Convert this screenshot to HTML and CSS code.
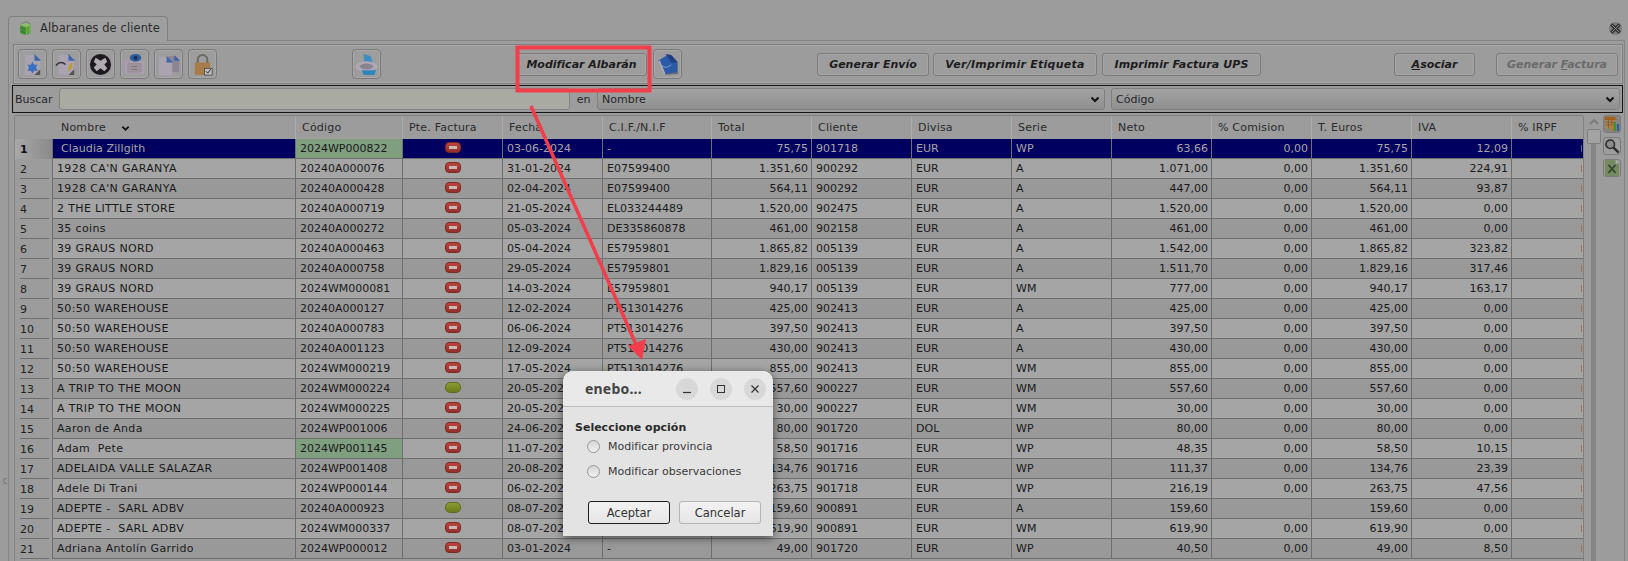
FILE: index.html
```html
<!DOCTYPE html>
<html lang="es">
<head>
<meta charset="utf-8">
<title>Albaranes de cliente</title>
<link rel="stylesheet" href="styles.css">
</head>
<body>
<div class="app">
  <div class="tabbar">
    <div class="tab">
      <svg class="tab-icon" viewBox="0 0 16 16"><path d="M3 3l5-2 5 2v10l-5 2-5-2z" fill="#8a8a84"/><path d="M2 5l6 2v8l-6-2z" fill="#4f9a3c"/><path d="M8 7l5-2v8l-5 2z" fill="#6fb04a"/><path d="M2 5l6-2 5 2-5 2z" fill="#8fc26a"/><path d="M4 6v8M6 6.500v8M2 8l6 2M2 11l6 2M10 6.500v8" stroke="#2f6a2a" stroke-width=".5"/></svg>
      <span>Albaranes de cliente</span>
    </div>
    <svg class="close-tab" viewBox="0 0 16 16"><circle cx="8" cy="8" r="7" fill="#7c7c7c"/><path d="M3.500 3.500l9 9M12.500 3.500l-9 9" stroke="#2f2f2f" stroke-width="3.400"/><path d="M4 4l8 8M12 4l-8 8" stroke="#8f8f8f" stroke-width="1"/></svg>
  </div>
  <div class="pane">
    <div class="toolbar">
      <button class="icon-btn"><svg viewBox="0 0 24 24"><path d="M4 2h11l5 5v16H4z" fill="#aba3b0"/><path d="M14 1l7 7h-7z" fill="#3f66a8"/><path d="M12 9l1.800 3.200 3.600 0-1.800 3 1.800 3.200-3.600 0L12 21.500l-1.800-3.100-3.600 0 1.800-3.200-1.800-3 3.600 0z" fill="#3b6fc0"/><path d="M20 17v6h-6z" fill="#57544f"/></svg></button>
      <button class="icon-btn icon-gap"><svg viewBox="0 0 24 24"><path d="M4 2h11l5 5v16H4z" fill="#aba3b0"/><path d="M14 1l7 7h-7z" fill="#3f66a8"/><path d="M1 13c3-4 7-4 10-1" fill="none" stroke="#333" stroke-width="1.500"/><path d="M17 10a6 6 0 0 1-6 9c3 0 4-2 3-4z" fill="#c09a1c"/><path d="M20 17v6h-6z" fill="#57544f"/></svg></button>
      <button class="icon-btn icon-gap"><svg viewBox="0 0 24 24"><circle cx="12" cy="12" r="11" fill="#1c1a1e"/><path d="M7 5l5 3 5-3 2 4-3 3 3 4-3 3-4-3-4 3-3-4 3-3-3-3z" fill="#b0abb0"/></svg></button>
      <button class="icon-btn icon-gap"><svg viewBox="0 0 24 24"><path d="M2 8l20 0v14H2z" fill="#aaa0ad"/><path d="M5 11h14v9H5z" fill="#a0959f" stroke="#8a8088" stroke-width=".5"/><path d="M9 14h6M9 17h6" stroke="#777" stroke-width="1"/><ellipse cx="13" cy="5" rx="6" ry="4" fill="#2d5c9c"/><circle cx="13" cy="5" r="2" fill="#122c55"/></svg></button>
      <button class="icon-btn icon-gap"><svg viewBox="0 0 24 24"><path d="M11 3h8l4 4v13H11z" fill="#8d8592"/><path d="M18 2l6 6h-6z" fill="#3f66a8"/><path d="M2 4h9l5 5v14H2z" fill="#aba3b0"/><path d="M10 3l7 7h-7z" fill="#3f66a8"/></svg></button>
      <button class="icon-btn icon-gap"><svg viewBox="0 0 24 24"><path d="M7 11V7a5 5 0 0 1 10 0v4" fill="none" stroke="#6a6660" stroke-width="2"/><rect x="4" y="10" width="16" height="13" rx="1" fill="#a87c48"/><rect x="14" y="16" width="8" height="7" fill="#c0c0c0" stroke="#333" stroke-width=".7"/><path d="M15.500 19l2 2 3-4" fill="none" stroke="#222" stroke-width="1"/></svg></button>
      <button class="icon-btn printer-gap"><svg viewBox="0 0 24 24"><path d="M9 1l7 2 4 10H10z" fill="#3a8ec0"/><ellipse cx="12" cy="14" rx="11.500" ry="5.500" fill="#b0a8b4"/><ellipse cx="12" cy="14" rx="7" ry="3" fill="#8a8490"/><path d="M7 18h15l-2 5H9z" fill="#2f86bb"/></svg></button>
      <button class="text-btn mod-btn">Modificar Albarán</button>
      <button class="icon-btn doc-gap"><svg viewBox="0 0 24 24"><path d="M10 23l13-1V10l-13 6z" fill="#6f6f6f"/><path d="M2 8l10-6 10 8v10l-13 2z" fill="#2a5aa8"/><path d="M10 1l6 1 7 8-7 0z" fill="#1e3f80"/><path d="M3 8l6 14" stroke="#b0a8b0" stroke-width="2"/><path d="M6 13c3 3 7 2 10-1" fill="none" stroke="#7ea8d8" stroke-width="1"/></svg></button>
      <button class="text-btn envio-btn">Generar Envío</button>
      <button class="text-btn ver-btn">Ver/Imprimir Etiqueta</button>
      <button class="text-btn ups-btn">Imprimir Factura UPS</button>
      <button class="text-btn asociar-btn"><u>A</u>sociar</button>
      <button class="text-btn factura-btn">Generar <u>F</u>actura</button>
    </div>
    <div class="searchbar">
      <label class="search-label">Buscar</label>
      <div class="search-input"></div>
      <span class="search-en">en</span>
      <div class="select select-a"><span>Nombre</span><svg class="chev" viewBox="0 0 10 7"><path d="M1.500 1.500L5 5l3.500-3.500" fill="none" stroke="#111" stroke-width="2"/></svg></div>
      <div class="select select-b"><span>Código</span><svg class="chev" viewBox="0 0 10 7"><path d="M1.500 1.500L5 5l3.500-3.500" fill="none" stroke="#111" stroke-width="2"/></svg></div>
    </div>
    <div class="main">
      <div class="table-wrap">
        <table class="grid">
          <colgroup>
            <col class="c-num"><col class="c-name"><col class="c-code"><col class="c-std"><col class="c-std"><col class="c-cif"><col class="c-std"><col class="c-std"><col class="c-std"><col class="c-std"><col class="c-std"><col class="c-std"><col class="c-std"><col class="c-std"><col class="c-last">
          </colgroup>
          <thead>
            <tr><th class="corner"></th><th class="th-name">Nombre <svg class="chev sort" viewBox="0 0 10 7"><path d="M1.500 1.500L5 5l3.500-3.500" fill="none" stroke="#111" stroke-width="2"/></svg></th><th>Código</th><th>Pte. Factura</th><th>Fecha</th><th>C.I.F./N.I.F</th><th>Total</th><th>Cliente</th><th>Divisa</th><th>Serie</th><th>Neto</th><th>% Comision</th><th>T. Euros</th><th>IVA</th><th>% IRPF</th></tr>
          </thead>
          <tbody>
            <tr class="sel"><td class="num">1</td><td class="ind">Claudia Zillgith</td><td class="green">2024WP000822</td><td class="st"><i class="pill red"></i></td><td>03-06-2024</td><td>-</td><td class="r">75,75</td><td>901718</td><td>EUR</td><td>WP</td><td class="r">63,66</td><td class="r">0,00</td><td class="r">75,75</td><td class="r">12,09</td><td class="irpf"></td></tr>
            <tr class="even"><td class="num">2</td><td class="nm">1928 CA'N GARANYA</td><td>20240A000076</td><td class="st"><i class="pill red"></i></td><td>31-01-2024</td><td>E07599400</td><td class="r">1.351,60</td><td>900292</td><td>EUR</td><td>A</td><td class="r">1.071,00</td><td class="r">0,00</td><td class="r">1.351,60</td><td class="r">224,91</td><td class="irpf"></td></tr>
            <tr><td class="num">3</td><td class="nm">1928 CA'N GARANYA</td><td>20240A000428</td><td class="st"><i class="pill red"></i></td><td>02-04-2024</td><td>E07599400</td><td class="r">564,11</td><td>900292</td><td>EUR</td><td>A</td><td class="r">447,00</td><td class="r">0,00</td><td class="r">564,11</td><td class="r">93,87</td><td class="irpf"></td></tr>
            <tr class="even"><td class="num">4</td><td class="nm">2 THE LITTLE STORE</td><td>20240A000719</td><td class="st"><i class="pill red"></i></td><td>21-05-2024</td><td>EL033244489</td><td class="r">1.520,00</td><td>902475</td><td>EUR</td><td>A</td><td class="r">1.520,00</td><td class="r">0,00</td><td class="r">1.520,00</td><td class="r">0,00</td><td class="irpf"></td></tr>
            <tr><td class="num">5</td><td class="nm">35 coins</td><td>20240A000272</td><td class="st"><i class="pill red"></i></td><td>05-03-2024</td><td>DE335860878</td><td class="r">461,00</td><td>902158</td><td>EUR</td><td>A</td><td class="r">461,00</td><td class="r">0,00</td><td class="r">461,00</td><td class="r">0,00</td><td class="irpf"></td></tr>
            <tr class="even"><td class="num">6</td><td class="nm">39 GRAUS NORD</td><td>20240A000463</td><td class="st"><i class="pill red"></i></td><td>05-04-2024</td><td>E57959801</td><td class="r">1.865,82</td><td>005139</td><td>EUR</td><td>A</td><td class="r">1.542,00</td><td class="r">0,00</td><td class="r">1.865,82</td><td class="r">323,82</td><td class="irpf"></td></tr>
            <tr><td class="num">7</td><td class="nm">39 GRAUS NORD</td><td>20240A000758</td><td class="st"><i class="pill red"></i></td><td>29-05-2024</td><td>E57959801</td><td class="r">1.829,16</td><td>005139</td><td>EUR</td><td>A</td><td class="r">1.511,70</td><td class="r">0,00</td><td class="r">1.829,16</td><td class="r">317,46</td><td class="irpf"></td></tr>
            <tr class="even"><td class="num">8</td><td class="nm">39 GRAUS NORD</td><td>2024WM000081</td><td class="st"><i class="pill red"></i></td><td>14-03-2024</td><td>E57959801</td><td class="r">940,17</td><td>005139</td><td>EUR</td><td>WM</td><td class="r">777,00</td><td class="r">0,00</td><td class="r">940,17</td><td class="r">163,17</td><td class="irpf"></td></tr>
            <tr><td class="num">9</td><td class="nm">50:50 WAREHOUSE</td><td>20240A000127</td><td class="st"><i class="pill red"></i></td><td>12-02-2024</td><td>PT513014276</td><td class="r">425,00</td><td>902413</td><td>EUR</td><td>A</td><td class="r">425,00</td><td class="r">0,00</td><td class="r">425,00</td><td class="r">0,00</td><td class="irpf"></td></tr>
            <tr class="even"><td class="num">10</td><td class="nm">50:50 WAREHOUSE</td><td>20240A000783</td><td class="st"><i class="pill red"></i></td><td>06-06-2024</td><td>PT513014276</td><td class="r">397,50</td><td>902413</td><td>EUR</td><td>A</td><td class="r">397,50</td><td class="r">0,00</td><td class="r">397,50</td><td class="r">0,00</td><td class="irpf"></td></tr>
            <tr><td class="num">11</td><td class="nm">50:50 WAREHOUSE</td><td>20240A001123</td><td class="st"><i class="pill red"></i></td><td>12-09-2024</td><td>PT513014276</td><td class="r">430,00</td><td>902413</td><td>EUR</td><td>A</td><td class="r">430,00</td><td class="r">0,00</td><td class="r">430,00</td><td class="r">0,00</td><td class="irpf"></td></tr>
            <tr class="even"><td class="num">12</td><td class="nm">50:50 WAREHOUSE</td><td>2024WM000219</td><td class="st"><i class="pill red"></i></td><td>17-05-2024</td><td>PT513014276</td><td class="r">855,00</td><td>902413</td><td>EUR</td><td>WM</td><td class="r">855,00</td><td class="r">0,00</td><td class="r">855,00</td><td class="r">0,00</td><td class="irpf"></td></tr>
            <tr><td class="num">13</td><td class="nm">A TRIP TO THE MOON</td><td>2024WM000224</td><td class="st"><i class="pill olive"></i></td><td>20-05-2024</td><td></td><td class="r">557,60</td><td>900227</td><td>EUR</td><td>WM</td><td class="r">557,60</td><td class="r">0,00</td><td class="r">557,60</td><td class="r">0,00</td><td class="irpf"></td></tr>
            <tr class="even"><td class="num">14</td><td class="nm">A TRIP TO THE MOON</td><td>2024WM000225</td><td class="st"><i class="pill red"></i></td><td>20-05-2024</td><td></td><td class="r">30,00</td><td>900227</td><td>EUR</td><td>WM</td><td class="r">30,00</td><td class="r">0,00</td><td class="r">30,00</td><td class="r">0,00</td><td class="irpf"></td></tr>
            <tr><td class="num">15</td><td class="nm">Aaron de Anda</td><td>2024WP001006</td><td class="st"><i class="pill red"></i></td><td>24-06-2024</td><td></td><td class="r">80,00</td><td>901720</td><td>DOL</td><td>WP</td><td class="r">80,00</td><td class="r">0,00</td><td class="r">80,00</td><td class="r">0,00</td><td class="irpf"></td></tr>
            <tr class="even"><td class="num">16</td><td class="nm">Adam&nbsp; Pete</td><td class="green">2024WP001145</td><td class="st"><i class="pill red"></i></td><td>11-07-2024</td><td></td><td class="r">58,50</td><td>901716</td><td>EUR</td><td>WP</td><td class="r">48,35</td><td class="r">0,00</td><td class="r">58,50</td><td class="r">10,15</td><td class="irpf"></td></tr>
            <tr><td class="num">17</td><td class="nm">ADELAIDA VALLE SALAZAR</td><td>2024WP001408</td><td class="st"><i class="pill red"></i></td><td>20-08-2024</td><td></td><td class="r">134,76</td><td>901716</td><td>EUR</td><td>WP</td><td class="r">111,37</td><td class="r">0,00</td><td class="r">134,76</td><td class="r">23,39</td><td class="irpf"></td></tr>
            <tr class="even"><td class="num">18</td><td class="nm">Adele Di Trani</td><td>2024WP000144</td><td class="st"><i class="pill red"></i></td><td>06-02-2024</td><td></td><td class="r">263,75</td><td>901718</td><td>EUR</td><td>WP</td><td class="r">216,19</td><td class="r">0,00</td><td class="r">263,75</td><td class="r">47,56</td><td class="irpf"></td></tr>
            <tr><td class="num">19</td><td class="nm">ADEPTE -&nbsp; SARL ADBV</td><td>20240A000923</td><td class="st"><i class="pill olive"></i></td><td>08-07-2024</td><td></td><td class="r">159,60</td><td>900891</td><td>EUR</td><td>A</td><td class="r">159,60</td><td class="r"></td><td class="r">159,60</td><td class="r">0,00</td><td class="irpf"></td></tr>
            <tr class="even"><td class="num">20</td><td class="nm">ADEPTE -&nbsp; SARL ADBV</td><td>2024WM000337</td><td class="st"><i class="pill red"></i></td><td>08-07-2024</td><td></td><td class="r">619,90</td><td>900891</td><td>EUR</td><td>WM</td><td class="r">619,90</td><td class="r">0,00</td><td class="r">619,90</td><td class="r">0,00</td><td class="irpf"></td></tr>
            <tr><td class="num">21</td><td class="nm">Adriana Antolín Garrido</td><td>2024WP000012</td><td class="st"><i class="pill red"></i></td><td>03-01-2024</td><td>-</td><td class="r">49,00</td><td>901720</td><td>EUR</td><td>WP</td><td class="r">40,50</td><td class="r">0,00</td><td class="r">49,00</td><td class="r">8,50</td><td class="irpf"></td></tr>
          </tbody>
        </table>
      </div>
      <div class="scrollbar">
        <svg class="scroll-up" viewBox="0 0 10 6"><path d="M1 5l4-4 4 4" fill="none" stroke="#7a7a7a" stroke-width="2"/></svg>
        <div class="scroll-thumb"></div>
        <div class="scroll-track"></div>
      </div>
      <div class="side-tools">
        <button class="side-btn side-on"><svg viewBox="0 0 18 18"><rect x="1" y="1" width="12" height="13" fill="#a8875a"/><path d="M1 4h12M1 7h12M1 10h12M5 1v13M9 1v13" stroke="#7e4f22" stroke-width=".8"/><rect x="1" y="1" width="12" height="3" fill="#a8611c"/><rect x="8" y="10" width="2.500" height="7" fill="#b87a18"/><rect x="11" y="7" width="2.500" height="10" fill="#3f8f3a"/><rect x="14.500" y="9" width="2.500" height="8" fill="#2b5f9f"/></svg></button>
        <button class="side-btn"><svg viewBox="0 0 18 18"><circle cx="7" cy="7" r="4.800" fill="#8c8c8c" stroke="#2d2d2d" stroke-width="1.800"/><path d="M10.500 10.500l6 6" stroke="#2d2d2d" stroke-width="2.600"/></svg></button>
        <button class="side-btn"><svg viewBox="0 0 18 18"><path d="M1 0h12l4 4v14H1z" fill="#758a63"/><path d="M13 0l4 4h-4z" fill="#b5b5b5"/><path d="M5 5.500l8 9M13 5.500l-8 9" stroke="#33492a" stroke-width="1.800"/></svg></button>
      </div>
    </div>
  </div>
  <i class="split-mark"></i>

  <svg class="annot" viewBox="0 0 1628 561">
    <rect class="annot-box" x="517.500" y="47.500" width="132" height="43"/>
    <path class="annot-line" d="M531 106L638 349"/>
    <path class="annot-head" d="M642 360L628 346L646 339z"/>
  </svg>

  <div class="dialog">
    <div class="dlg-title">
      <span class="dlg-name">enebo...</span>
      <span class="wm-btn"><svg viewBox="0 0 22 22"><path d="M7 14.500h8" stroke="#333" stroke-width="1.200"/></svg></span>
      <span class="wm-btn"><svg viewBox="0 0 22 22"><rect x="7.500" y="7.500" width="7" height="7" fill="none" stroke="#333" stroke-width="1"/></svg></span>
      <span class="wm-btn"><svg viewBox="0 0 22 22"><path d="M7.500 7.500l7 7M14.500 7.500l-7 7" stroke="#333" stroke-width="1.200"/></svg></span>
    </div>
    <div class="dlg-body">
      <div class="dlg-head">Seleccione opción</div>
      <div class="radio-row"><i class="radio"></i><span>Modificar provincia</span></div>
      <div class="radio-row"><i class="radio"></i><span>Modificar observaciones</span></div>
      <div class="dlg-actions">
        <button class="dlg-btn dlg-default">Aceptar</button>
        <button class="dlg-btn">Cancelar</button>
      </div>
    </div>
  </div>
</div>
</body>
</html>
```
FILE: styles.css
```css
* { box-sizing: border-box; }
html, body { margin: 0; padding: 0; }
body { background: #9c9c9c; }

.app {
  position: relative;
  width: 1628px;
  height: 561px;
  overflow: hidden;
  padding-top: 16px;
  background: #9c9c9c;
  color: #1e1e1e;
  font: 11px "DejaVu Sans", sans-serif;
}

/* tabs */
.tabbar {
  display: flex;
  justify-content: space-between;
  align-items: center;
  height: 24px;
  padding: 0 5px 0 8px;
}
.tab {
  position: relative;
  z-index: 1;
  display: flex;
  align-items: center;
  gap: 6px;
  width: 160px;
  height: 25px;
  margin-bottom: -1px;
  padding: 0 0 2px 9px;
  border: 1px solid #808080;
  border-bottom: 0;
  border-radius: 4px 4px 0 0;
  background: #9f9f9f;
  color: #2b2b2b;
  font-size: 11.500px;
  letter-spacing: .1px;
}
.tab-icon { width: 16px; height: 16px; }
.close-tab { width: 15px; height: 15px; margin-top: 1px; }

.pane {
  height: 521px;
  margin-left: 8px;
  margin-right: 3px;
  padding: 3px 1px 0 4px;
  border: 1px solid #858585;
  border-bottom: 0;
  border-radius: 2px 2px 0 0;
}

/* toolbar */
.toolbar {
  display: flex;
  align-items: center;
  height: 40px;
  padding-left: 4px;
  border: 1px solid #7f7f7f;
  box-shadow: inset 0 0 0 1px #a9a9a9;
}
button { font: inherit; color: inherit; margin: 0; padding: 0; }
.icon-btn {
  display: flex;
  align-items: center;
  justify-content: center;
  width: 29px;
  height: 30px;
  border: 1px solid #7b7b7b;
  border-radius: 4px;
  background: #9d9d9d;
  box-shadow: inset 0 0 0 1px #a8a8a8;
}
.icon-btn svg { width: 23px; height: 23px; filter: blur(.35px); }
.icon-gap { margin-left: 5px; }
.printer-gap { margin-left: 135px; }
.doc-gap { margin-left: 6px; }
.text-btn {
  height: 23px;
  border: 1px solid #7b7b7b;
  border-radius: 3px;
  background: #9d9d9d;
  box-shadow: inset 0 0 0 1px #a5a5a5;
  font-weight: bold;
  font-style: italic;
  color: #1c1c1c;
  white-space: nowrap;
}
.mod-btn { width: 131px; margin-left: 135px; }
.envio-btn { width: 112px; margin-left: 135px; }
.ver-btn { width: 164px; margin-left: 4px; letter-spacing: .25px; }
.ups-btn { width: 159px; margin-left: 5px; letter-spacing: .1px; }
.asociar-btn { width: 81px; margin-left: 133px; }
.factura-btn { width: 122px; margin-left: 21px; color: #6a6a6a; }

/* search */
.searchbar {
  display: flex;
  align-items: center;
  height: 28px;
  margin-top: 1px;
  margin-left: -1px;
  padding-left: 2px;
  border: 1px solid #141414;
}
.search-label { width: 44px; color: #262626; }
.search-input {
  width: 511px;
  height: 22px;
  border: 1px solid #838383;
  border-radius: 3px;
  background: #a9aaa1;
}
.search-en { width: 27px; text-align: center; color: #262626; }
.select {
  display: flex;
  align-items: center;
  justify-content: space-between;
  height: 22px;
  padding: 0 4px 0 4px;
  border: 1px solid #808080;
  border-radius: 3px;
  background: linear-gradient(#a2a2a2, #909090);
  color: #262626;
}
.select-a { width: 508px; }
.select-b { width: 509px; margin-left: 6px; }
.chev { width: 10px; height: 7px; }

/* table */
.main { display: flex; margin-top: 2px; margin-left: 1px; }
.table-wrap {
  width: 1570px;
  height: 446px;
  overflow: hidden;
  border-top: 1px solid #7f7f7f;
  border-left: 1px solid #858585;
  border-right: 1px solid #808080;
  border-radius: 3px 3px 0 0;
}
.grid {
  width: 1568px;
  table-layout: fixed;
  border-collapse: separate;
  border-spacing: 0;
}
.c-num { width: 37px; }
.c-name { width: 243px; }
.c-code { width: 107px; }
.c-std { width: 100px; }
.c-cif { width: 109px; }
.c-last { width: 72px; }
.grid th {
  height: 23px;
  padding: 0 0 0 6px;
  border-left: 1px solid #adadad;
  background: #9c9c9c;
  color: #2a2a2a;
  font-weight: normal;
  text-align: left;
  letter-spacing: .2px;
  white-space: nowrap;
}
.grid th.corner { border-left: 0; }
.grid th.th-name { border-left: 0; padding-left: 9px; }
.sort { margin-left: 11px; vertical-align: -1px; width: 9px; }
.grid td {
  height: 20px;
  padding: 0 4px;
  border-left: 1px solid #6e6e6e;
  border-bottom: 1px solid #6e6e6e;
  background: #999;
  color: #1a1a1a;
  white-space: nowrap;
  overflow: hidden;
}
.grid tr.even td { background: #a5a5a5; }
.grid td.r { text-align: right; padding-right: 3px; }
.grid td.st { text-align: center; padding: 0; }
.grid td.nm { letter-spacing: .35px; }
.grid td.num,
.grid tr.even td.num {
  padding-left: 5px;
  border: 0;
  background: linear-gradient(#6e6e6e, #6e6e6e) 5px 100% / 29px 1px no-repeat #9c9c9c;
  color: #222;
}
.grid tr.sel td.num {
  background: linear-gradient(90deg, #a8a8a8, #8a8a8a);
  font-weight: bold;
  color: #111;
}
.grid tr.sel td { background: #000060; color: #a6a6a6; }
.grid td.ind { padding-left: 8px; letter-spacing: .1px; }
.grid td.green,
.grid tr.sel td.green,
.grid tr.even td.green { background: #7f9f80; color: #1a1a1a; }
.grid td.irpf { background: linear-gradient(#94794a, #94794a) right 1px center / 1px 7px no-repeat #999; }
.grid tr.even td.irpf { background: linear-gradient(#94794a, #94794a) right 1px center / 1px 7px no-repeat #a5a5a5; }
.grid tr.sel td.irpf { background: linear-gradient(#3a6aa0, #3a6aa0) right 1px center / 1px 7px no-repeat #000060; }
.pill {
  display: inline-block;
  width: 16px;
  height: 11px;
  border-radius: 4px;
  vertical-align: -1px;
}
.pill.red {
  border: 1px solid #7c2a25;
  background: linear-gradient(#bc443c, #94302a);
}
.pill.red::after {
  content: "";
  display: block;
  width: 8px;
  height: 3px;
  margin: 3px auto 0;
  background: #c9b8b8;
}
.pill.olive {
  border: 1px solid #5f6c20;
  border-radius: 5px;
  background: linear-gradient(#8d9c35, #6a7a1c);
}

/* scrollbar */
.scrollbar {
  display: flex;
  flex-direction: column;
  align-items: center;
  width: 15px;
  margin-left: 2px;
}
.scroll-up { width: 10px; height: 6px; margin-top: 4px; }
.scroll-thumb {
  width: 14px;
  height: 15px;
  margin-top: 4px;
  border: 1px solid #7e7e7e;
  border-radius: 2px;
  background: #a3a3a3;
}
.scroll-track { width: 5px; flex: 1; background: #858585; }

.side-tools {
  display: flex;
  flex-direction: column;
  gap: 4px;
  margin-left: 2px;
}
.side-btn {
  display: flex;
  align-items: center;
  justify-content: center;
  width: 18px;
  height: 18px;
  border: 1px solid #7b7b7b;
  border-radius: 3px;
  background: #9d9d9d;
}
.side-btn.side-on { background: #858585; }
.side-btn svg { width: 16px; height: 16px; filter: blur(.25px); }

.split-mark {
  position: absolute;
  left: 3px;
  top: 478px;
  width: 4px;
  height: 6px;
  border: 1px solid #7a7a7a;
  border-right: 0;
  border-radius: 3px 0 0 3px;
}

/* annotation */
.annot {
  position: absolute;
  left: 0;
  top: 0;
  width: 1628px;
  height: 561px;
  pointer-events: none;
}
.annot-box { fill: none; stroke: #f23d4a; stroke-width: 4; }
.annot-line { fill: none; stroke: #f23d4a; stroke-width: 3.500; }
.annot-head { fill: #f23d4a; }

/* dialog */
.dialog {
  position: absolute;
  left: 563px;
  top: 371px;
  width: 210px;
  height: 165px;
  border-radius: 10px 10px 0 0;
  background: #e3e3e3;
  box-shadow: 0 2px 8px rgba(0, 0, 0, .55);
  color: #333;
  font: 11px "DejaVu Sans", sans-serif;
}
.dlg-title {
  display: flex;
  align-items: center;
  height: 36px;
  padding: 0 7px 0 22px;
  border-bottom: 1px solid #bdbdbd;
  border-radius: 10px 10px 0 0;
  background: #e9e9e9;
}
.dlg-name {
  flex: 1;
  font: bold 14px "Noto Sans", "Open Sans", sans-serif;
  color: #444;
  letter-spacing: .2px;
}
.wm-btn {
  display: block;
  width: 22px;
  height: 22px;
  margin-left: 12px;
  border-radius: 50%;
  background: #d8d8d8;
}
.wm-btn svg { display: block; width: 22px; height: 22px; }
.dlg-body { padding: 15px 12px 0 12px; }
.dlg-head { font-weight: bold; line-height: 12px; color: #2a2a2a; }
.radio-row {
  display: flex;
  align-items: center;
  height: 25px;
  padding-left: 12px;
  color: #3a3a3a;
}
.radio-row span { margin-left: 8px; }
.radio {
  width: 13px;
  height: 13px;
  border: 1px solid #979797;
  border-radius: 50%;
  background: linear-gradient(#d6d6d6, #f0f0f0);
}
.dlg-actions {
  display: flex;
  gap: 9px;
  margin-top: 17px;
  padding-left: 13px;
}
.dlg-btn {
  width: 82px;
  height: 23px;
  border: 1px solid #b5b5b5;
  border-radius: 3px;
  background: linear-gradient(#f2f2f2, #e6e6e6);
  color: #333;
  font-size: 11.500px;
}
.dlg-default { border: 1.500px solid #1e1e1e; }
```
